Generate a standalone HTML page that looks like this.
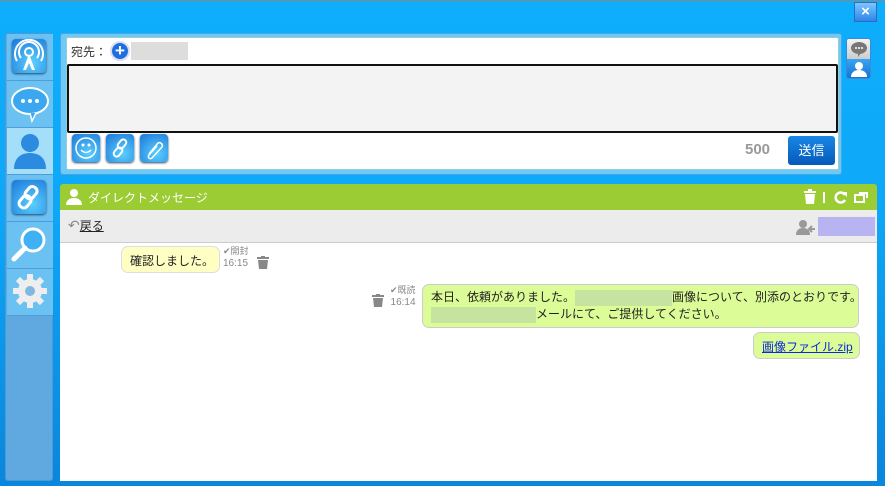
<!DOCTYPE html><html><head><meta charset="utf-8"><style>
*{margin:0;padding:0;box-sizing:border-box}
body{width:885px;height:486px;overflow:hidden;font-family:"Liberation Sans","Noto Sans CJK JP",sans-serif;font-size:12px;color:#222;position:relative;background:linear-gradient(#0eaefc 0,#0ea8f8 200px,#0a86dc 486px);border-top:1px solid #888;}
.abs{position:absolute;white-space:nowrap}
.side{left:5px;top:32px;width:48px;height:448px;background:#5fa9e0;border-radius:3px;border:1px solid #4b9ad6}
.si{position:absolute;left:1px;width:46px;height:47px;background:#6cc1f3;border-bottom:1px solid #4f9dd8}
.btn{position:absolute;left:5px;top:5px;width:34px;height:34px;border-radius:4px;background:radial-gradient(circle at 60% 70%,#5ad0ff,#1c76d8);box-shadow:0 1px 2px #246;}
.tb{position:absolute;top:133px;width:28px;height:28px;border-radius:4px;background:radial-gradient(circle at 60% 70%,#5ad0ff,#1c76d8);box-shadow:0 1px 2px #246}
</style></head><body>
<div class="abs" style="left:854px;top:1px;width:23px;height:20px;background:linear-gradient(#7cc6ff,#2d86e8);border:1px solid #2a6ec0;color:#fff;font-size:15px;text-align:center;line-height:18px;font-weight:bold">×</div>
<div class="abs side">
<div class="si" style="top:0"><div class="btn"><svg width="34" height="34"><g fill="none" stroke="#fff" stroke-width="2"><circle cx="17" cy="13" r="4"/><path d="M9 19a10 10 0 1 1 16 0M5 22a14 14 0 1 1 24 0"/></g><path d="M17 15l-6 16h3l3-7 3 7h3z" fill="#fff"/></svg></div></div>
<div class="si" style="top:47px"><svg width="46" height="46"><ellipse cx="23" cy="20" rx="18" ry="13" fill="#3aa7f0" stroke="#fff" stroke-width="2"/><path d="M23 32l2 8 4-8" fill="#3aa7f0" stroke="#fff" stroke-width="1.5"/><circle cx="16" cy="20" r="2" fill="#fff"/><circle cx="23" cy="20" r="2" fill="#fff"/><circle cx="30" cy="20" r="2" fill="#fff"/></svg></div>
<div class="si" style="top:94px;background:#a5def9"><svg width="46" height="46"><circle cx="23" cy="15" r="9" fill="#2b8be0"/><path d="M7 41c0-12 8-16 16-16s16 4 16 16z" fill="#2b8be0"/></svg></div>
<div class="si" style="top:141px"><div class="btn"><svg width="34" height="34" fill="none" stroke="#fff" stroke-width="3"><rect x="15" y="6" width="9" height="13" rx="4" transform="rotate(40 19 12)"/><rect x="9" y="15" width="9" height="13" rx="4" transform="rotate(40 13 21)"/></svg></div></div>
<div class="si" style="top:188px"><svg width="46" height="46"><circle cx="26" cy="18" r="11" fill="#3fb0f5" stroke="#fff" stroke-width="3"/><path d="M18 26l-11 11" stroke="#fff" stroke-width="5" stroke-linecap="round"/></svg></div>
<div class="si" style="top:235px"><svg width="46" height="46"><g fill="#eee"><circle cx="23" cy="22" r="12"/><rect x="20" y="5" width="6" height="34"/><rect x="6" y="19" width="34" height="6"/><rect x="20" y="5" width="6" height="34" transform="rotate(45 23 22)"/><rect x="20" y="5" width="6" height="34" transform="rotate(-45 23 22)"/></g><circle cx="23" cy="22" r="5" fill="#7fb9e0"/></svg></div>
</div>
<div class="abs" style="left:60px;top:32px;width:782px;height:142px;background:#6dc9f7;border:1px solid #4aa6e0;border-radius:3px"></div>
<div class="abs" style="left:66px;top:36px;width:773px;height:133px;background:#fff;border:1px solid #9cc;border-radius:2px"></div>
<div class="abs" style="left:71px;top:42px;font-size:12px;color:#333">宛先：</div>
<div class="abs" style="left:110px;top:40px;width:20px;height:20px;border-radius:50%;background:#1d6fe0;border:2px solid #dde;color:#fff;font-weight:bold;text-align:center;line-height:15px;font-size:17px">+</div>
<div class="abs" style="left:131px;top:41px;width:57px;height:18px;background:#ddd"></div>
<div class="abs" style="left:67px;top:63px;width:771px;height:69px;background:#f3f3f3;border:2px solid #111;border-radius:2px"></div>
<div class="tb" style="left:72px"><svg width="28" height="28" fill="none" stroke="#fff" stroke-width="1.5"><circle cx="14" cy="14" r="10"/><circle cx="11" cy="11" r=".8"/><circle cx="17" cy="11" r=".8"/><path d="M9 16q5 5 10 0"/></svg></div>
<div class="tb" style="left:106px"><svg width="28" height="28" fill="none" stroke="#fff" stroke-width="2"><rect x="13" y="5" width="6" height="10" rx="3" transform="rotate(40 16 10)"/><rect x="9" y="13" width="6" height="10" rx="3" transform="rotate(40 12 18)"/></svg></div>
<div class="tb" style="left:140px"><svg width="28" height="28" fill="none" stroke="#fff" stroke-width="1.5"><path d="M9 20l9-11a3 3 0 0 1 4 4l-10 11a2 2 0 0 1-3-3l8-9"/></svg></div>
<div class="abs" style="left:745px;top:140px;font-size:15px;font-weight:bold;color:#999">500</div>
<div class="abs" style="left:788px;top:135px;width:47px;height:29px;background:linear-gradient(#1987e6,#0659b8);border-radius:3px;color:#fff;text-align:center;line-height:29px;font-size:13px">送信</div>
<div class="abs" style="left:846px;top:37px;width:25px;height:41px;border:1px solid #3b8ad8;border-radius:3px;overflow:hidden"><div style="height:20px;background:linear-gradient(#f4f4f4,#ccc)"><svg width="24" height="20"><ellipse cx="12" cy="9" rx="8" ry="6" fill="#777"/><path d="M11 14v4l3-4" fill="#777"/><circle cx="9" cy="9" r="1" fill="#fff"/><circle cx="12" cy="9" r="1" fill="#fff"/><circle cx="15" cy="9" r="1" fill="#fff"/></svg></div><div style="height:20px;background:linear-gradient(#3aa4f4,#1370d0)"><svg width="24" height="20"><circle cx="12" cy="7" r="4" fill="#fff"/><path d="M4 18c0-5 4-7 8-7s8 2 8 7z" fill="#fff"/></svg></div></div>
<div class="abs" style="left:60px;top:183px;width:817px;height:26px;background:#9ccc34;border-radius:3px 3px 0 0"></div>
<svg class="abs" style="left:65px;top:187px" width="18" height="18"><circle cx="9" cy="5" r="4" fill="#fff"/><path d="M1 17c0-5 4-7 8-7s8 2 8 7z" fill="#fff"/></svg>
<div class="abs" style="left:88px;top:188px;color:#fff;font-size:12px">ダイレクトメッセージ</div>
<svg class="abs" style="left:802px;top:188px" width="70" height="16"><g fill="#fff"><rect x="2" y="2" width="12" height="2"/><rect x="6" y="0" width="4" height="2"/><path d="M3 5h10l-1 10H4z"/><rect x="21" y="3" width="2" height="11"/><rect x="53" y="6" width="9" height="7" fill="none" stroke="#fff" stroke-width="2"/><rect x="57" y="3" width="9" height="2"/><rect x="64" y="3" width="2" height="6"/></g><path d="M43 6a5 5 0 1 0 0 5" fill="none" stroke="#fff" stroke-width="2.5"/><path d="M40 3l5 0 0 5z" fill="#fff"/></svg>
<div class="abs" style="left:60px;top:209px;width:817px;height:33px;background:#ececec;border-bottom:1px solid #ccc"></div>
<div class="abs" style="left:68px;top:216px;color:#222;font-size:12px"><span style="color:#888;font-size:14px">↶</span><u>戻る</u></div>
<svg class="abs" style="left:796px;top:218px" width="20" height="16"><circle cx="7" cy="5" r="4" fill="#999"/><path d="M0 16c0-5 3-7 7-7s7 2 7 7z" fill="#999"/><path d="M19 10h-5m2-3l-3 3 3 3" stroke="#999" stroke-width="2" fill="none"/></svg>
<div class="abs" style="left:818px;top:216px;width:57px;height:19px;background:#b8b4f2"></div>
<div class="abs" style="left:60px;top:242px;width:817px;height:238px;background:#fff"></div>
<div class="abs" style="left:121px;top:245px;width:99px;height:27px;background:#ffffc4;border:1px solid #ddd;border-radius:7px;padding:5px 8px;font-size:12px">確認しました。</div>
<div class="abs" style="left:223px;top:244px;color:#888;font-size:9px;line-height:12px">✔開封<br><span style="font-size:10px">16:15</span></div>
<svg class="abs" style="left:257px;top:255px" width="12" height="13"><g fill="#888"><rect x="0" y="1" width="12" height="2"/><rect x="4" y="0" width="4" height="1"/><path d="M1 4h10l-1 9H2z"/></g></svg>
<div class="abs" style="left:390px;top:283px;color:#888;font-size:9px;line-height:12px;text-align:right">✔既読<br><span style="font-size:10px">16:14</span></div>
<svg class="abs" style="left:372px;top:293px" width="12" height="13"><g fill="#888"><rect x="0" y="1" width="12" height="2"/><rect x="4" y="0" width="4" height="1"/><path d="M1 4h10l-1 9H2z"/></g></svg>
<div class="abs" style="left:422px;top:283px;width:437px;height:44px;background:#dcfc98;border:1px solid #ccc;border-radius:7px;padding:4px 8px;font-size:12px;line-height:17px">本日、依頼がありました。<span style="display:inline-block;width:97px;height:16px;background:#c6e3a0;vertical-align:middle"></span>画像について、別添のとおりです。<br><span style="display:inline-block;width:105px;height:16px;background:#c6e3a0;vertical-align:middle"></span>メールにて、ご提供してください。</div>
<div class="abs" style="left:753px;top:331px;width:107px;height:27px;background:#dcfc98;border:1px solid #ccc;border-radius:7px;padding:5px 8px;font-size:12px;color:#0a2ad8;text-decoration:underline">画像ファイル.zip</div>
</body></html>
